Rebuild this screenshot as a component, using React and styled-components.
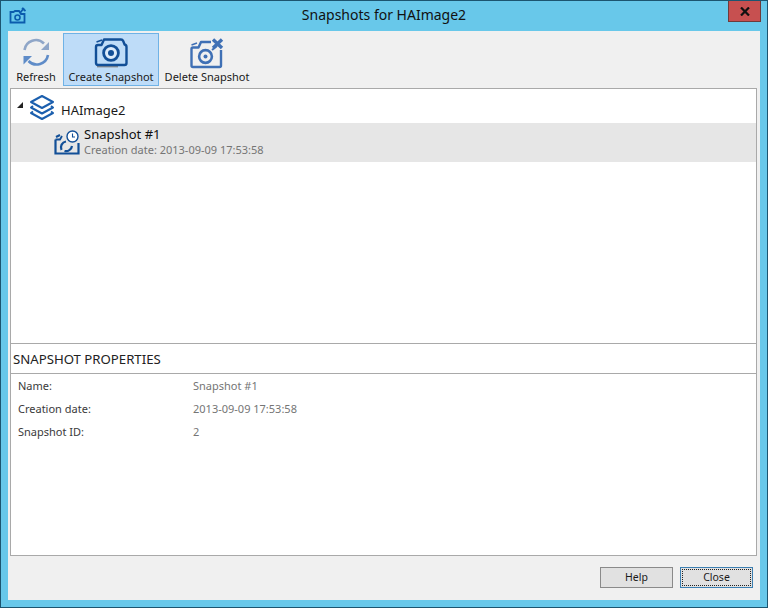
import React from 'react'
import styled, { createGlobalStyle } from 'styled-components'

const GlobalStyle = createGlobalStyle`
  html, body { margin: 0; padding: 0; background: #68c8ea; }
  #root { width: 768px; height: 608px; }
`

const Frame = styled.div`
  box-sizing: border-box;
  width: 768px;
  height: 608px;
  background: #68c8ea;
  border: 1px solid #1c5570;
  display: flex;
  flex-direction: column;
  font-family: "Noto Sans", "Open Sans", sans-serif;
  font-size: 11px;
  color: #1a1a1a;
`

const TitleBar = styled.div`
  height: 30px;
  flex: none;
  position: relative;
  display: flex;
  align-items: center;
  justify-content: center;
  font-size: 14px;
  color: #111;
  padding-bottom: 3px;
  box-sizing: border-box;
`

const AppIcon = styled.div`
  position: absolute;
  left: 8px;
  top: 6px;
  width: 18px;
  height: 18px;
`

const CloseX = styled.div`
  position: absolute;
  right: 6px;
  top: 0;
  width: 33px;
  height: 21px;
  box-sizing: border-box;
  background: #c75050;
  border: 1px solid #6e3a3a;
  border-top: none;
  display: flex;
  align-items: center;
  justify-content: center;
`

const Body = styled.div`
  flex: 1;
  margin: 0 7px 7px 7px;
  background: #f0f0f0;
  display: flex;
  flex-direction: column;
  min-height: 0;
`

const Toolbar = styled.div`
  height: 57px;
  flex: none;
  display: flex;
  align-items: flex-start;
  padding: 2px 0 0 1px;
  box-sizing: border-box;
`

const ToolButton = styled.div`
  box-sizing: border-box;
  width: ${p => p.$w}px;
  height: 53px;
  display: flex;
  flex-direction: column;
  align-items: center;
  justify-content: space-between;
  padding: 3px 0 1px;
  background: ${p => (p.$active ? '#bedcf8' : 'transparent')};
  border: 1px solid ${p => (p.$active ? '#6fb2e6' : 'transparent')};
  white-space: nowrap;
  font-size: 11px;
  line-height: 14px;
`

const Panel = styled.div`
  margin: 0 3px 0 2px;
  background: #fff;
  border: 1px solid #a9a9a9;
  box-sizing: border-box;
`

const TreePanel = styled(Panel)`
  height: 255px;
  flex: none;
  border-bottom: none;
  padding-top: 5px;
`

const RootRow = styled.div`
  height: 29px;
  display: flex;
  align-items: center;
  padding-left: 6px;
  font-size: 13px;
`

const Arrow = styled.div`
  width: 0;
  height: 0;
  margin-top: -7px;
  margin-right: 6px;
  border-style: solid;
  border-width: 0 0 6px 6px;
  border-color: transparent transparent #222 transparent;
`

const StackWrap = styled.div`
  display: flex;
  margin-top: -4px;
`

const RootLabel = styled.span`
  margin-left: 6px;
  margin-top: 3px;
`

const SnapshotRow = styled.div`
  height: 39px;
  background: #e6e6e6;
  display: flex;
  align-items: center;
  padding-left: 43px;
`

const SnapshotText = styled.div`
  margin-left: 4px;
  display: flex;
  flex-direction: column;
  margin-top: -3px;
`

const SnapshotName = styled.div`
  font-size: 13px;
  line-height: 17px;
  color: #111;
`

const SnapshotDate = styled.div`
  font-size: 11px;
  line-height: 14px;
  color: #757575;
`

const PropsPanel = styled(Panel)`
  height: 213px;
  flex: none;
`

const PropsHeader = styled.div`
  height: 30px;
  box-sizing: border-box;
  border-bottom: 1px solid #a9a9a9;
  padding: 1px 0 0 2px;
  display: flex;
  align-items: center;
  font-size: 13.2px;
  color: #222;
`

const PropsGrid = styled.div`
  display: grid;
  grid-template-columns: 175px 1fr;
  grid-auto-rows: 23px;
  padding: 0 0 0 7px;
  align-items: center;
  font-size: 11px;
`

const PropLabel = styled.div`
  color: #3a3a3a;
`

const PropValue = styled.div`
  color: #757575;
`

const Footer = styled.div`
  flex: 1;
  display: flex;
  justify-content: flex-end;
  align-items: flex-start;
  gap: 7px;
  padding: 11px 7px 0 0;
`

const Button = styled.div`
  box-sizing: border-box;
  width: 73px;
  height: 21px;
  padding-bottom: 2px;
  background: #e1e1e1;
  border: 1px solid ${p => (p.$focused ? '#3c7fb1' : '#8a8a8a')};
  display: flex;
  align-items: center;
  justify-content: center;
  font-size: 10.5px;
  color: #1a1a1a;
  position: relative;
  &::after {
    content: '';
    display: ${p => (p.$focused ? 'block' : 'none')};
    position: absolute;
    inset: 1px;
    border: 1px dotted #222;
  }
`

const CreateIcon = () => (
  <svg width="34" height="32" viewBox="0 0 34 32" fill="none">
    <path d="M3 29.5 H24" stroke="#8c8c8c" strokeWidth="1.8" />
    <path d="M2.5 5 L8 3" stroke="#124f97" strokeWidth="1.6" />
    <path d="M2 10 Q2 8 4 8 H7.5 L10 2.5 H27 Q28.5 2.5 29.2 4 L30.6 7.5 Q32.5 8 32.5 10 V26 Q32.5 28 30.5 28 H4 Q2 28 2 26 Z" stroke="#124f97" strokeWidth="2.4" strokeLinejoin="round" />
    <circle cx="17" cy="16" r="7.4" fill="#dcebfa" stroke="#124f97" strokeWidth="2.8" />
    <circle cx="17" cy="16" r="3" fill="#124f97" />
  </svg>
)

const DeleteIcon = () => (
  <svg width="34" height="32" viewBox="0 0 34 32" fill="none">
    <path d="M1.5 8 L7 6" stroke="#3f70b5" strokeWidth="1.6" />
    <path d="M21 5 H11 L8.5 10.5 H3 Q1.5 10.5 1.5 12 V28.5 Q1.5 30 3 30 H29.5 Q31 30 31 28.5 V13" stroke="#3f70b5" strokeWidth="2.4" strokeLinejoin="round" />
    <circle cx="15.5" cy="19.5" r="6.4" stroke="#3f70b5" strokeWidth="2.6" />
    <circle cx="15.5" cy="19.5" r="2" fill="#3f70b5" />
    <path d="M22 13 L27 9" stroke="#3f70b5" strokeWidth="2" />
    <path d="M23 2.5 L32 11 M32 2.5 L23 11" stroke="#3f70b5" strokeWidth="3.4" />
  </svg>
)

const LogoIcon = () => (
  <svg width="18" height="18" viewBox="0 0 18 18" fill="none">
    <path d="M1.5 5 V15.5 H15.5 V7 H12 L10 4 H6 L4.5 5 Z" stroke="#0b5cad" strokeWidth="1.8" />
    <circle cx="8.5" cy="10.5" r="2.5" stroke="#0b5cad" strokeWidth="1.6" />
    <path d="M11 6 L15 1 M13 1 L16.5 4" stroke="#0b5cad" strokeWidth="1.8" />
  </svg>
)

const RefreshIcon = () => (
  <svg width="32" height="32" viewBox="0 0 32 32" fill="none">
    <path d="M4.5 13 A11.5 11.5 0 0 1 24 6.5" stroke="#8fa6c8" strokeWidth="2.6" />
    <path d="M29 5 V13 H21 Z" fill="#8fa6c8" />
    <path d="M28 18 A11.5 11.5 0 0 1 8.5 24" stroke="#5f8cc8" strokeWidth="2.6" />
    <path d="M3.5 27.5 V19 H12 Z" fill="#5f8cc8" />
  </svg>
)

const StackIcon = () => (
  <svg width="26" height="26" viewBox="0 0 26 26" fill="none" stroke="#1b5fae" strokeWidth="2" strokeLinejoin="round">
    <path d="M13 2 L24 8 L13 14 L2 8 Z" />
    <path d="M4 12 L2 13.5 L13 19.5 L24 13.5 L22 12" />
    <path d="M4 17.5 L2 19 L13 25 L24 19 L22 17.5" />
  </svg>
)

const SnapshotIcon = () => (
  <svg width="26" height="26" viewBox="0 0 26 26" fill="none">
    <path d="M2 7 L6 5 M1.5 9.5 V23.5 H24.5 V13" stroke="#124f97" strokeWidth="2.2" />
    <path d="M1.5 9.5 H6 L8 6" stroke="#124f97" strokeWidth="1.8" />
    <path d="M7.5 20 A6 6 0 0 1 12 11.5" stroke="#124f97" strokeWidth="2.2" />
    <path d="M18 16 A6 6 0 0 1 10.5 21" stroke="#124f97" strokeWidth="2.2" />
    <circle cx="18.5" cy="6.5" r="5.5" fill="#fff" stroke="#124f97" strokeWidth="1.4" />
    <path d="M18.5 3.5 V7 H21" stroke="#124f97" strokeWidth="1.1" />
  </svg>
)

export default function App() {
  return (
    <Frame>
      <GlobalStyle />
      <TitleBar>
        <AppIcon><LogoIcon /></AppIcon>
        Snapshots for HAImage2
        <CloseX>
          <svg width="10" height="9" viewBox="0 0 10 9">
            <path d="M1 0.5 L9 8.5 M9 0.5 L1 8.5" stroke="#111" strokeWidth="2.2" />
          </svg>
        </CloseX>
      </TitleBar>
      <Body>
        <Toolbar>
          <ToolButton $w={54}>
            <RefreshIcon />
            Refresh
          </ToolButton>
          <ToolButton $w={96} $active>
            <CreateIcon />
            Create Snapshot
          </ToolButton>
          <ToolButton $w={96}>
            <DeleteIcon />
            Delete Snapshot
          </ToolButton>
        </Toolbar>
        <TreePanel>
          <RootRow>
            <Arrow />
            <StackWrap><StackIcon /></StackWrap>
            <RootLabel>HAImage2</RootLabel>
          </RootRow>
          <SnapshotRow>
            <SnapshotIcon />
            <SnapshotText>
              <SnapshotName>Snapshot #1</SnapshotName>
              <SnapshotDate>Creation date: 2013-09-09 17:53:58</SnapshotDate>
            </SnapshotText>
          </SnapshotRow>
        </TreePanel>
        <PropsPanel>
          <PropsHeader>SNAPSHOT PROPERTIES</PropsHeader>
          <PropsGrid>
            <PropLabel>Name:</PropLabel>
            <PropValue>Snapshot #1</PropValue>
            <PropLabel>Creation date:</PropLabel>
            <PropValue>2013-09-09 17:53:58</PropValue>
            <PropLabel>Snapshot ID:</PropLabel>
            <PropValue>2</PropValue>
          </PropsGrid>
        </PropsPanel>
        <Footer>
          <Button>Help</Button>
          <Button $focused>Close</Button>
        </Footer>
      </Body>
    </Frame>
  )
}
